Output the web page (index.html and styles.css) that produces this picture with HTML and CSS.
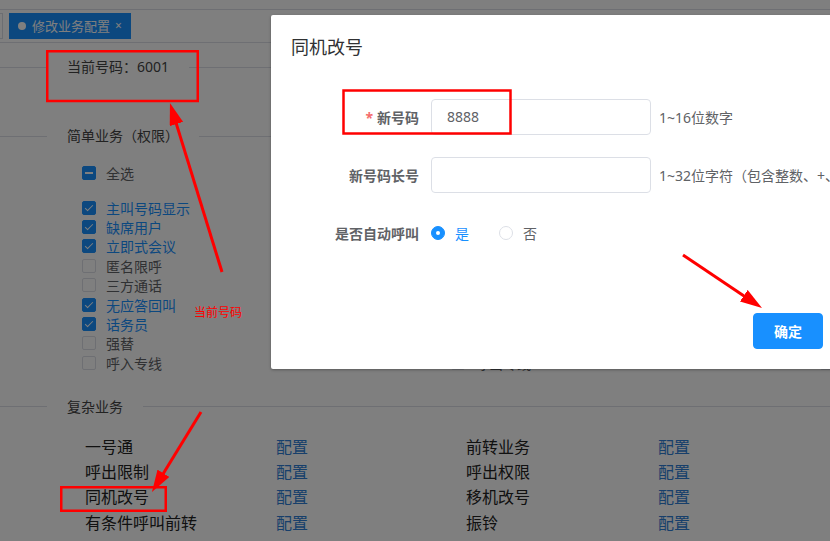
FILE: index.html
```html
<!DOCTYPE html>
<html lang="zh-CN">

<head>
  <meta charset="UTF-8">
  <meta name="viewport" content="width=device-width, initial-scale=1.0">
  <title>修改业务配置</title>
  <link rel="stylesheet" href="styles.css">
</head>

<body>
  <div class="page">
    <div class="tabs">
      <span class="tab tab-home">首页</span>
      <span class="tab tab-active"><i class="dot"></i>修改业务配置<span class="close">×</span></span>
    </div>

    <div class="group group-number">
      <div class="legend"><span>当前号码：6001</span></div>
    </div>

    <div class="group">
      <div class="legend"><span>简单业务（权限）</span></div>
      <div class="check check-all"><span class="box half"></span>全选</div>
      <div class="check-grid">
        <div class="check on"><span class="box"></span>主叫号码显示</div>
        <div class="check on"><span class="box"></span>缺席用户</div>
        <div class="check on"><span class="box"></span>立即式会议</div>
        <div class="check"><span class="box"></span>匿名限呼</div>
        <div class="check"><span class="box"></span>三方通话</div>
        <div class="check on"><span class="box"></span>无应答回叫</div>
        <div class="check on"><span class="box"></span>话务员</div>
        <div class="check"><span class="box"></span>强替</div>
        <div class="check"><span class="box"></span>呼入专线</div>

        <div class="check"><span class="box"></span>呼叫等待</div>
        <div class="check"><span class="box"></span>遇忙回叫</div>
        <div class="check"><span class="box"></span>免打扰</div>
        <div class="check"><span class="box"></span>缩位拨号</div>
        <div class="check"><span class="box"></span>热线服务</div>
        <div class="check"><span class="box"></span>闹钟服务</div>
        <div class="check"><span class="box"></span>呼叫代答</div>
        <div class="check"><span class="box"></span>强拆</div>
        <div class="check"><span class="box"></span>呼出专线</div>

        <div class="check"><span class="box"></span>语音</div>
        <div class="check"><span class="box"></span>会议</div>
        <div class="check"><span class="box"></span>追查</div>
        <div class="check"><span class="box"></span>密码</div>
        <div class="check"><span class="box"></span>秘书</div>
        <div class="check"><span class="box"></span>代答</div>
        <div class="check"><span class="box"></span>插入</div>
        <div class="check"><span class="box"></span>监听</div>
        <div class="check"><span class="box"></span>录音</div>
      </div>
    </div>

    <div class="group group-complex">
      <div class="legend"><span>复杂业务</span></div>
      <div class="complex-grid">
        <span>一号通</span><a>配置</a><span>前转业务</span><a>配置</a>
        <span>呼出限制</span><a>配置</a><span>呼出权限</span><a>配置</a>
        <span>同机改号</span><a>配置</a><span>移机改号</span><a>配置</a>
        <span>有条件呼叫前转</span><a>配置</a><span>振铃</span><a>配置</a>
      </div>
    </div>
  </div>

  <div class="mask"></div>

  <div class="dialog">
    <div class="dialog-header">同机改号</div>
    <div class="dialog-body">
      <div class="form-item">
        <label class="form-label required">新号码</label>
        <div class="input">8888</div>
        <span class="hint">1~16位数字</span>
      </div>
      <div class="form-item">
        <label class="form-label">新号码长号</label>
        <div class="input"></div>
        <span class="hint">1~32位字符（包含整数、+、-）</span>
      </div>
      <div class="form-item">
        <label class="form-label">是否自动呼叫</label>
        <span class="radio on"><span class="radio-inner"></span>是</span>
        <span class="radio"><span class="radio-inner"></span>否</span>
      </div>
    </div>
    <div class="dialog-footer">
      <button class="btn-primary">确定</button>
    </div>
  </div>

  <!-- annotations drawn on top of the screenshot -->
  <svg class="marks" width="830" height="541">
    <defs>
      <marker id="head" markerUnits="userSpaceOnUse" markerWidth="22" markerHeight="14" viewBox="0 0 22 14"
        refX="12" refY="7" orient="auto">
        <path d="M0,0 L22,7 L0,14 z" fill="#ff0000" />
      </marker>
    </defs>
    <rect x="47.25" y="51.25" width="150.5" height="49.75" />
    <rect x="343.5" y="90.5" width="167" height="43" />
    <rect x="61.25" y="487.25" width="104.5" height="23.5" />
    <line x1="222" y1="272" x2="172.9" y2="112.6" marker-end="url(#head)" />
    <line x1="201" y1="412" x2="157.2" y2="483.5" marker-end="url(#head)" />
    <line x1="683" y1="255" x2="753.7" y2="302.4" marker-end="url(#head)" />
    <text x="194" y="317">当前号码</text>
  </svg>
</body>

</html>
```

FILE: styles.css
```css
body {
  margin: 0;
  width: 830px;
  height: 541px;
  overflow: hidden;
  position: relative;
  background: #fff;
  font-family: "Noto Sans", "Noto Sans CJK SC", sans-serif;
  color: #303133;
}

.page {
  height: 541px;
  overflow: hidden;
}

/* tab bar */
.tabs {
  margin-top: 9px;
  height: 29px;
  padding-top: 3px;
  border-top: 1px solid #dcdfe6;
  border-bottom: 1px solid #dcdfe6;
  display: flex;
  align-items: flex-start;
  gap: 6px;
}

.tab {
  height: 26px;
  box-sizing: border-box;
  border: 1px solid #d8dce5;
  padding: 0 8px;
  font-size: 13px;
  line-height: 24px;
  color: #495060;
  display: flex;
  align-items: center;
  white-space: nowrap;
  flex: none;
}

.tab-home {
  width: 60px;
  margin-left: -57px;
  overflow: hidden;
}

.tab-active {
  width: 122px;
  background: #1890ff;
  border-color: #1890ff;
  color: #fff;
}

.tab-active .dot {
  width: 8px;
  height: 8px;
  border-radius: 50%;
  background: #fff;
  margin-right: 6px;
}

.tab-active .close {
  font-size: 12px;
  margin-left: 5px;
}

/* fieldset like groups */
.legend {
  display: flex;
  align-items: center;
  height: 20px;
  font-size: 14px;
  line-height: 20px;
  color: #444;
}

.legend::before {
  content: '';
  width: 47px;
  border-top: 1px solid #dcdfe6;
}

.legend::after {
  content: '';
  flex: 1;
  border-top: 1px solid #dcdfe6;
}

.legend span {
  padding: 0 20px;
  white-space: nowrap;
}

.group-number {
  margin-top: 14px;
  padding-bottom: 49px;
}

.check {
  display: flex;
  align-items: center;
  gap: 10px;
  font-size: 14px;
  color: #606266;
  white-space: nowrap;
  overflow: hidden;
}

.check-all {
  margin: 17px 0 0 82px;
  height: 20px;
}

.check-grid {
  margin: 15px 0 0 82px;
  display: grid;
  grid-auto-flow: column;
  grid-template-rows: repeat(9, 19.4px);
  grid-template-columns: 369px 369px 369px;
  overflow: hidden;
}

.box {
  width: 14px;
  height: 14px;
  box-sizing: border-box;
  border: 1px solid #dcdfe6;
  border-radius: 2px;
  background: #fff;
  position: relative;
  flex: none;
}

.check.on {
  color: #1890ff;
}

.check.on .box,
.box.half {
  background: #1890ff;
  border-color: #1890ff;
}

.check.on .box::after {
  content: '';
  position: absolute;
  left: 4px;
  top: 1px;
  width: 3px;
  height: 7px;
  border: 1px solid #fff;
  border-left: 0;
  border-top: 0;
  transform: rotate(45deg);
}

.box.half::after {
  content: '';
  position: absolute;
  left: 2px;
  right: 2px;
  top: 5px;
  height: 2px;
  background: #fff;
}

.group-complex .legend {
  margin-top: 24px;
}

.complex-grid {
  margin-top: 18px;
  padding-left: 85px;
  display: grid;
  grid-template-columns: 191px 190px 192px 170px;
  grid-auto-rows: 25.4px;
  font-size: 16px;
  line-height: 25.4px;
  color: #222;
  white-space: nowrap;
}

.complex-grid a {
  color: #2f7fd6;
}

.mask {
  position: absolute;
  inset: 0;
  background: rgba(0, 0, 0, 0.5);
}

/* dialog */
.dialog {
  position: absolute;
  left: 271px;
  top: 15px;
  width: 572px;
  background: #fff;
  border-radius: 2px;
  box-shadow: 0 1px 3px rgba(0, 0, 0, 0.3);
  overflow: hidden;
}

.dialog-header {
  padding: 20px 20px 10px;
  font-size: 18px;
  line-height: 24px;
  color: #303133;
}

.dialog-body {
  padding: 30px 20px;
}

.form-item {
  display: flex;
  align-items: center;
  height: 36px;
  margin-bottom: 22px;
  font-size: 14px;
}

.form-label {
  flex: none;
  width: 140px;
  box-sizing: border-box;
  padding-right: 12px;
  text-align: right;
  color: #606266;
  font-weight: bold;
}

.form-label.required::before {
  content: '*';
  color: #f56c6c;
  margin-right: 4px;
}

.input {
  flex: none;
  width: 220px;
  height: 36px;
  box-sizing: border-box;
  border: 1px solid #dcdfe6;
  border-radius: 4px;
  padding: 0 15px;
  line-height: 34px;
  color: #606266;
}

.hint {
  flex: none;
  margin-left: 8px;
  color: #606266;
  white-space: nowrap;
}

.radio {
  display: inline-flex;
  align-items: center;
  margin-right: 30px;
  color: #606266;
}

.radio-inner {
  width: 14px;
  height: 14px;
  box-sizing: border-box;
  border: 1px solid #dcdfe6;
  border-radius: 50%;
  margin-right: 10px;
  position: relative;
}

.radio.on {
  color: #1890ff;
}

.radio.on .radio-inner {
  background: #1890ff;
  border-color: #1890ff;
}

.radio.on .radio-inner::after {
  content: '';
  position: absolute;
  left: 4px;
  top: 4px;
  width: 4px;
  height: 4px;
  border-radius: 50%;
  background: #fff;
}

.dialog-footer {
  padding: 10px 20px 20px;
  text-align: right;
}

.btn-primary {
  height: 36px;
  padding: 0 20px;
  border: 1px solid #1890ff;
  border-radius: 4px;
  background: #1890ff;
  color: #fff;
  font-family: inherit;
  font-size: 14px;
  font-weight: bold;
}

/* red annotations */
.marks {
  position: absolute;
  left: 0;
  top: 0;
}

.marks rect {
  fill: none;
  stroke: #ff0000;
  stroke-width: 2.5;
}

.marks line {
  stroke: #ff0000;
  stroke-width: 3;
}

.marks text {
  fill: #ff0000;
  font-family: "Noto Sans CJK SC", sans-serif;
  font-size: 12px;
}
```
